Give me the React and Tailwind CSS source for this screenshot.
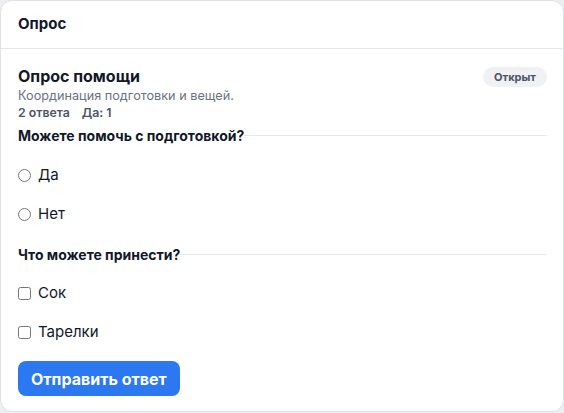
import { useState } from "react";

const font = { fontFamily: "Inter, 'Liberation Sans', sans-serif" };

const Legend = ({ children }) => (
  <div className="flex items-center h-5">
    <span className="text-[14px] font-bold text-[#111827] whitespace-nowrap">
      {children}
    </span>
    <div className="flex-1 h-px bg-[#e5e7eb]" />
  </div>
);

export default function App() {
  const [help, setHelp] = useState(null);
  const [items, setItems] = useState({ juice: false, plates: false });

  return (
    <div className="min-h-screen bg-[#eceef1]" style={font}>
      <div className="bg-white border border-[#dfe2e6] rounded-xl overflow-hidden">
        <div className="h-12 px-[17px] flex items-center border-b border-[#e3e6ea]">
          <h1 className="text-[15px] font-bold text-[#111827]">Опрос</h1>
        </div>

        <div className="px-[17px] pt-[15px] pb-[15px]">
          <div className="flex items-start justify-between">
            <div>
              <h2 className="text-[16px] leading-6 font-bold text-[#111827]">Опрос помощи</h2>
              <p className="text-[12.7px] leading-4 text-[#6b7280]">
                Координация подготовки и вещей.
              </p>
              <p className="text-[12.3px] leading-4 font-semibold text-[#4b5563] mt-px">
                2 ответа<span className="ml-3">Да: 1</span>
              </p>
            </div>
            <span className="mt-[3px] mr-[-1px] h-5 px-[11px] rounded-full bg-[#eff1f4] text-[11px] font-bold text-[#4b5563] flex items-center">
              Открыт
            </span>
          </div>

          <div className="mt-1 mr-[-1px]">
            <Legend>Можете помочь с подготовкой?</Legend>
            <div className="mt-[11px]">
              {["Да", "Нет"].map((opt) => (
                <label key={opt} className="h-[39px] flex items-center gap-[7px] text-[15px] text-[#111827]">
                  <input
                    type="radio"
                    name="help"
                    checked={help === opt}
                    onChange={() => setHelp(opt)}
                    className="w-[13px] h-[13px]"
                  />
                  {opt}
                </label>
              ))}
            </div>
          </div>

          <div className="mt-[10px]">
            <Legend>Что можете принести?</Legend>
            <div className="mt-[10px]">
              {[
                ["juice", "Сок"],
                ["plates", "Тарелки"],
              ].map(([key, label]) => (
                <label key={key} className="h-[39px] flex items-center gap-[7px] text-[15px] text-[#111827]">
                  <input
                    type="checkbox"
                    checked={items[key]}
                    onChange={() => setItems((prev) => ({ ...prev, [key]: !prev[key] }))}
                    className="w-[13px] h-[13px]"
                  />
                  {label}
                </label>
              ))}
            </div>
          </div>

          <button className="mt-[9px] h-[35px] px-[13px] rounded-lg bg-[#2b78f0] text-white text-[16px] font-bold">
            Отправить ответ
          </button>
        </div>
      </div>
    </div>
  );
}
